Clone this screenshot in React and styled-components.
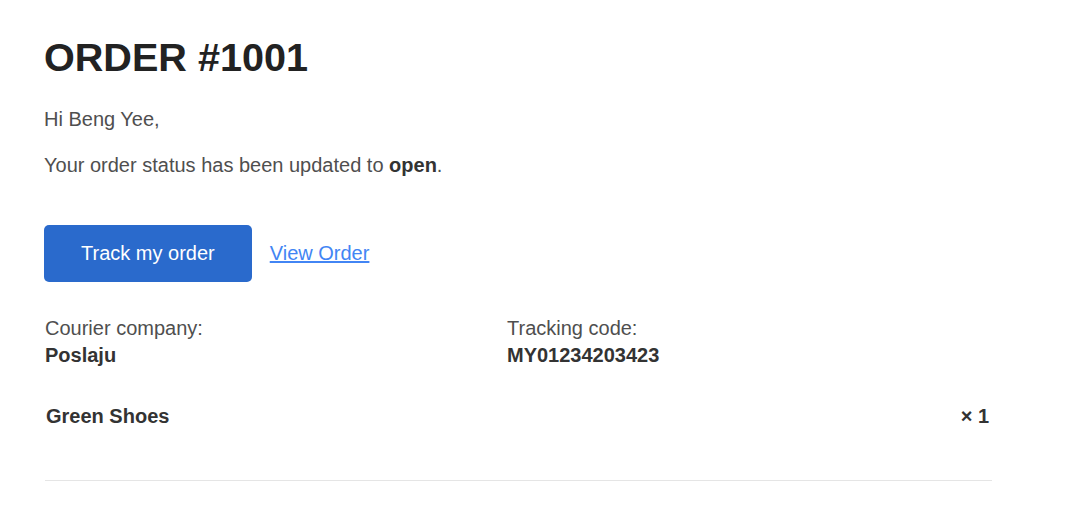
import React from "react";
import styled, { createGlobalStyle } from "styled-components";

const GlobalStyle = createGlobalStyle`
  html, body {
    margin: 0;
    padding: 0;
    background: #ffffff;
  }
  body {
    font-family: "Liberation Sans", Arial, sans-serif;
    color: #555555;
  }
`;

const Page = styled.main`
  width: 948px;
  padding: 33px 44px 30px;
`;

const Title = styled.h1`
  margin: 0;
  font-size: 39.6px;
  line-height: 48px;
  font-weight: 700;
  color: #222222;
`;

const Paragraph = styled.p`
  margin: ${(p) => (p.$first ? "23px" : "16px")} 0 0;
  font-size: 20px;
  line-height: 30px;
  color: #4f4f4f;

  strong {
    color: #333333;
  }
`;

const Actions = styled.div`
  display: flex;
  align-items: center;
  gap: 18px;
  margin-top: 45px;
`;

const PrimaryButton = styled.a`
  display: inline-flex;
  align-items: center;
  justify-content: center;
  height: 57px;
  padding: 0 37px;
  box-sizing: border-box;
  border-radius: 5px;
  background: #2a6acc;
  color: #ffffff;
  font-size: 20px;
  text-decoration: none;
`;

const TextLink = styled.a`
  font-size: 20px;
  color: #4285f4;
  text-decoration: underline;
`;

const InfoGrid = styled.div`
  display: grid;
  grid-template-columns: 462px 1fr;
  margin-top: 33px;
  padding-left: 1px;
`;

const InfoCell = styled.div`
  display: flex;
  flex-direction: column;
  font-size: 20px;
  line-height: 27px;
`;

const InfoLabel = styled.span`
  color: #4f4f4f;
`;

const InfoValue = styled.strong`
  color: #333333;
`;

const ItemList = styled.div`
  margin-top: 34px;
  padding-bottom: 50px;
  border-bottom: 1px solid #e5e5e5;
  margin-left: 1px;
`;

const ItemRow = styled.div`
  display: flex;
  justify-content: space-between;
  align-items: center;
  font-size: 20px;
  line-height: 27px;
  font-weight: 700;
  color: #333333;
`;

const ItemName = styled.span`
  padding-left: 1px;
`;

const ItemQty = styled.span`
  padding-right: 3px;
`;

export default function App() {
  return (
    <>
      <GlobalStyle />
      <Page>
        <Title>ORDER #1001</Title>
        <Paragraph $first>Hi Beng Yee,</Paragraph>
        <Paragraph>
          Your order status has been updated to <strong>open</strong>.
        </Paragraph>
        <Actions>
          <PrimaryButton href="#">Track my order</PrimaryButton>
          <TextLink href="#">View Order</TextLink>
        </Actions>
        <InfoGrid>
          <InfoCell>
            <InfoLabel>Courier company:</InfoLabel>
            <InfoValue>Poslaju</InfoValue>
          </InfoCell>
          <InfoCell>
            <InfoLabel>Tracking code:</InfoLabel>
            <InfoValue>MY01234203423</InfoValue>
          </InfoCell>
        </InfoGrid>
        <ItemList>
          <ItemRow>
            <ItemName>Green Shoes</ItemName>
            <ItemQty>× 1</ItemQty>
          </ItemRow>
        </ItemList>
      </Page>
    </>
  );
}
